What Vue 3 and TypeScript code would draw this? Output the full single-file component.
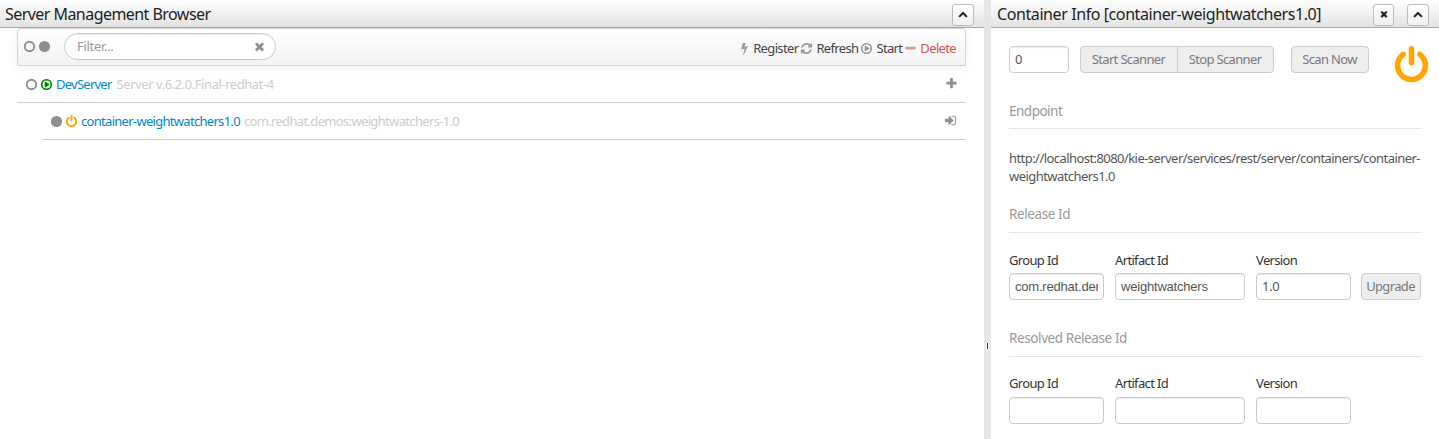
<script setup lang="ts">
import { ref } from 'vue'

const icons: Record<string, string> = {
  times: 'M1490 1322q0 40-28 68l-136 136q-28 28-68 28t-68-28l-294-294-294 294q-28 28-68 28t-68-28l-136-136q-28-28-28-68t28-68l294-294-294-294q-28-28-28-68t28-68l136-136q28-28 68-28t68 28l294 294 294-294q28-28 68-28t68 28l136 136q28 28 28 68t-28 68l-294 294 294 294q28 28 28 68z',
  plus: 'M1600 736v192q0 40-28 68t-68 28h-416v416q0 40-28 68t-68 28h-192q-40 0-68-28t-28-68v-416h-416q-40 0-68-28t-28-68v-192q0-40 28-68t68-28h416v-416q0-40 28-68t68-28h192q40 0 68 28t28 68v416h416q40 0 68 28t28 68z',
  refresh: 'M1639 1056q0 5-1 7-64 268-268 434.500t-478 166.500q-146 0-282.500-55t-243.500-157l-129 129q-19 19-45 19t-45-19-19-45v-448q0-26 19-45t45-19h448q26 0 45 19t19 45-19 45l-137 137q71 66 161 102t187 36q134 0 250-65t186-179q11-17 53-117 8-23 30-23h192q13 0 22.500 9.500t9.500 22.500zm25-800v448q0 26-19 45t-45 19h-448q-26 0-45-19t-19-45 19-45l138-138q-148-137-349-137-134 0-250 65t-186 179q-11 17-53 117-8 23-30 23h-199q-13 0-22.500-9.500t-9.500-22.500v-7q65-268 270-434.500t480-166.500q146 0 284 55.500t245 156.500l130-129q19-19 45-19t45 19 19 45z',
  power: 'M1664 896q0 156-61 298t-164 245-245 164-298 61-298-61-245-164-164-245-61-298q0-182 80.500-343t226.500-270q43-32 95.500-25t83.500 50q32 42 24.500 94.500t-49.500 84.500q-98 74-151.500 181t-53.500 228q0 104 40.500 198.500t109.500 163.500 163.500 109.500 198.500 40.500 198.500-40.500 163.500-109.500 109.500-163.500 40.500-198.500q0-121-53.500-228t-151.500-181q-42-32-49.500-84.500t24.500-94.500q31-43 84-50t95 25q146 109 226.500 270t80.500 343zm-640-768v640q0 52-38 90t-90 38-90-38-38-90v-640q0-52 38-90t90-38 90 38 38 90z',
  bolt: 'M1333 566q18 20 7 44l-540 1157q-13 25-42 25-4 0-14-2-17-5-25.500-19t-4.500-30l197-808-406 101q-4 1-12 1-18 0-31-11-18-15-13-39l201-825q4-14 16-23t28-9h328q19 0 32 12.500t13 29.500q0 8-5 18l-171 463 396-98q8-2 12-2 19 0 34 15z',
  signin: 'M1312 896q0 26-19 45l-544 544q-19 19-45 19t-45-19-19-45v-288h-448q-26 0-45-19t-19-45v-384q0-26 19-45t45-19h448v-288q0-26 19-45t45-19 45 19l544 544q19 19 19 45zm352-352v704q0 119-84.500 203.500t-203.500 84.500h-320q-13 0-22.500-9.500t-9.500-22.500q0-4-1-20t-.5-26.500 3-23.500 10-19.500 20.500-6.500h320q66 0 113-47t47-113v-704q0-66-47-113t-113-47h-312l-11.500-1-11.500-3-8-5.500-7-9-2-13.500q0-4-1-20t-.5-26.500 3-23.500 10-19.500 20.500-6.500h320q119 0 203.500 84.500t84.500 203.500z',
  circle: 'M1664 896a768 768 0 1 1-1536 0a768 768 0 1 1 1536 0z',
  ring: 'M896 370a526 526 0 1 0 0 1052a526 526 0 1 0 0-1052zM896 118a778 778 0 1 1 0 1556a778 778 0 1 1 0-1556z',
  play: 'M1312 896q0 37-32 55l-544 320q-15 9-32 9-16 0-32-8-32-19-32-56v-640q0-37 32-56 33-18 64 1l544 320q32 18 32 55zM896 352a544 544 0 1 0 0 1088a544 544 0 1 0 0-1088zM896 128a768 768 0 1 1 0 1536a768 768 0 1 1 0-1536z',
  minus: 'M1600 736v192q0 40-28 68t-68 28h-1216q-40 0-68-28t-28-68v-192q0-40 28-68t68-28h1216q40 0 68 28t28 68z',
  up: 'M1683 1331l-166 165q-19 19-45 19t-45-19l-531-531-531 531q-19 19-45 19t-45-19l-166-165q-19-19-19-45.500t19-45.500l742-741q19-19 45-19t45 19l742 741q19 19 19 45.500t-19 45.500z',
}

const actions = [
  { name: 'register', icon: 'bolt', label: 'Register' },
  { name: 'refresh', icon: 'refresh', label: 'Refresh' },
  { name: 'start', icon: 'play', label: 'Start' },
  { name: 'delete', icon: 'minus', label: 'Delete' },
]

const filter = ref('')
const interval = ref('0')
const groupId = ref('com.redhat.demos')
const artifactId = ref('weightwatchers')
const version = ref('1.0')
</script>

<template>
  <div class="workbench">
    <section class="browser">
      <header class="bar">
        <h3 class="title-left">Server Management Browser</h3>
        <button class="tool"><svg viewBox="0 0 1792 1792"><path :d="icons.up" /></svg></button>
      </header>
      <div class="toolbar">
        <svg class="i12" viewBox="0 0 1792 1792"><path fill-rule="evenodd" :d="icons.ring" /></svg>
        <svg class="i12 second" viewBox="0 0 1792 1792"><path :d="icons.circle" /></svg>
        <div class="search">
          <input v-model="filter" placeholder="Filter..." />
          <svg viewBox="0 0 1792 1792"><path :d="icons.times" /></svg>
        </div>
        <nav class="actions">
          <a v-for="a in actions" :key="a.name" :class="a.name">
            <svg viewBox="0 0 1792 1792"><path fill-rule="evenodd" :d="icons[a.icon]" /></svg><span>{{ a.label }}</span>
          </a>
        </nav>
      </div>
      <div class="row server">
        <svg class="i12" viewBox="0 0 1792 1792"><path fill-rule="evenodd" :d="icons.ring" /></svg>
        <svg class="i12 green" viewBox="0 0 1792 1792"><path fill-rule="evenodd" :d="icons.play" /></svg>
        <a>DevServer</a><span class="meta">Server v.6.2.0.Final-redhat-4</span>
        <svg class="end" viewBox="0 0 1792 1792"><path :d="icons.plus" /></svg>
      </div>
      <div class="row container">
        <svg class="i12" viewBox="0 0 1792 1792"><path :d="icons.circle" /></svg>
        <svg class="i12 orange" viewBox="0 0 1792 1792"><path :d="icons.power" /></svg>
        <a>container-weightwatchers1.0</a><span class="meta">com.redhat.demos:weightwatchers-1.0</span>
        <svg class="end" viewBox="0 0 1792 1792"><path :d="icons.signin" /></svg>
      </div>
    </section>

    <div class="splitter"><i></i></div>

    <section class="info">
      <header class="bar">
        <h3 class="title-right">Container Info [container-weightwatchers1.0]</h3>
        <button class="tool close"><svg viewBox="0 0 1792 1792"><path :d="icons.times" /></svg></button>
        <button class="tool"><svg viewBox="0 0 1792 1792"><path :d="icons.up" /></svg></button>
      </header>
      <div class="body">
        <div class="scanner">
          <input v-model="interval" class="field interval" />
          <div class="group">
            <button class="btn">Start Scanner</button><button class="btn">Stop Scanner</button>
          </div>
          <button class="btn scan">Scan Now</button>
          <svg class="status" viewBox="0 0 1792 1792"><path :d="icons.power" /></svg>
        </div>
        <h4 class="endpoint">Endpoint</h4>
        <p class="url">http://localhost:8080/kie-server/services/rest/server/containers/container-<br />weightwatchers1.0</p>
        <h4 class="release">Release Id</h4>
        <div class="fields">
          <label>Group Id<input v-model="groupId" class="field arial" /></label>
          <label>Artifact Id<input v-model="artifactId" class="field arial" /></label>
          <label>Version<input v-model="version" class="field version" /></label>
          <button class="btn upgrade">Upgrade</button>
        </div>
        <h4 class="resolved">Resolved Release Id</h4>
        <div class="fields empty">
          <label>Group Id<input class="field" /></label>
          <label>Artifact Id<input class="field" /></label>
          <label>Version<input class="field" /></label>
        </div>
      </div>
    </section>
  </div>
</template>

<style>
body { margin: 0; overflow: hidden; background: #fff; }
</style>

<style scoped>
* { box-sizing: border-box; }
.workbench { display: flex; width: 1439px; height: 439px; overflow: hidden; font: 13px/18px "Noto Sans", Tahoma, sans-serif; color: #333; white-space: nowrap; letter-spacing: -0.65px; }
svg { display: block; flex: none; fill: currentColor; }
input, button { font: inherit; letter-spacing: inherit; margin: 0; outline: none; }
h3, h4, p { margin: 0; font-weight: 400; }
.browser { width: 984px; }
.info { width: 448px; }
.splitter { width: 7px; background: #e6e6e6; display: flex; align-items: flex-end; }
.splitter i { width: 1px; height: 6px; background: #333; box-shadow: 1px 0 #fff, -1px 0 #fff; margin: 0 0 90px 3px; }
.bar { display: flex; align-items: center; height: 28px; padding: 0 10px 0 5px; border-bottom: 1px solid #aaa; background: linear-gradient(#fff, #e3e3e3); }
.bar h3 { margin-right: auto; font-size: 16px; line-height: 27px; padding-top: 1px; color: #222; letter-spacing: -0.55px; }
.info .bar { padding-left: 6px; }
.bar .title-right { letter-spacing: -0.41px; }
.tool { width: 22px; height: 22px; margin-top: 2px; padding: 0 0 1px; display: flex; align-items: center; justify-content: center; border: 1px solid #bbb; border-radius: 3px; background: linear-gradient(#fff, #f0f0f0); color: #222; }
.tool svg { width: 10px; height: 10px; }
.tool.close { width: 21px; margin-right: 13px; }
.toolbar { display: flex; align-items: center; width: 949px; height: 38px; margin-left: 17px; padding: 0 9px 2px 5px; border: 1px solid #d4d4d4; border-radius: 4px 4px 0 0; background: linear-gradient(#fff, #f2f2f2); box-shadow: 0 1px 10px rgba(0, 0, 0, .065); color: #8f8f8f; }
.i12 { width: 13px; height: 13px; }
.second { margin-left: 2px; }
.search { display: flex; align-items: center; width: 212px; height: 27px; margin-left: 13px; padding: 0 9px 0 12px; border: 1px solid #ccc; border-radius: 14px; background: #fff; box-shadow: inset 0 1px 1px rgba(0, 0, 0, .075); }
.search input { flex: 1; min-width: 0; border: 0; padding: 0; background: none; letter-spacing: -0.3px; }
.search input::placeholder { color: #999; opacity: 1; }
.search svg { width: 13px; height: 13px; }
.actions { display: flex; gap: 2px; margin: 4px 0 0 auto; color: #444; }
.actions a { display: flex; align-items: center; }
.actions svg { width: 13px; height: 13px; color: #999; }
.actions span { margin-left: 3px; }
.actions .register span { margin-left: 2px; }
.actions .delete, .actions .delete svg { color: #d9534f; }
.actions .delete svg { opacity: .6; }
.row { display: flex; align-items: center; height: 37px; margin-left: 17px; width: 949px; padding: 0 8px; border-bottom: 1px solid #d0d0d0; color: #8f8f8f; }
.row a { color: #0088cc; margin-left: 3px; letter-spacing: -0.75px; }
.row .meta { color: #ccc; margin-left: 5px; letter-spacing: -0.44px; }
.row .end { width: 13px; height: 13px; margin: -2px 0 0 auto; }
.container { margin-left: 42px; width: 924px; padding-right: 9px; }
.container a { letter-spacing: -0.7px; }
.container .meta { margin-left: 4px; letter-spacing: -0.66px; }
.green { color: #008000; margin-left: 2px; }
.orange { color: #ffa500; margin-left: 2px; }
.body { padding: 18px 0 0 18px; width: 430px; }
.scanner { display: flex; height: 37px; }
.field { display: block; height: 27px; padding: 0 5px; border: 1px solid #ccc; border-radius: 4px; background: #fff; color: #555; box-shadow: inset 0 1px 1px rgba(0, 0, 0, .075); }
.interval { width: 60px; padding-bottom: 2px; }
.arial { font-family: "Liberation Sans", Arial, sans-serif; letter-spacing: -0.2px; }
.version { letter-spacing: -0.3px; padding-bottom: 1px; }
.btn { height: 27px; padding: 0 1px 1px 0; border: 1px solid #ccc; border-radius: 4px; background: #eee; color: #7a7a7a; text-align: center; }
.group { display: flex; margin-left: 11px; }
.group .btn { width: 98px; }
.group .btn:first-child { border-radius: 4px 0 0 4px; }
.group .btn:last-child { border-radius: 0 4px 4px 0; margin-left: -1px; width: 97px; }
.scan { width: 78px; flex: none; margin-left: 17px; }
.status { width: 39px; height: 39px; margin: 0 0 0 23px; color: #ffa500; }
h4 { width: 412px; border-bottom: 1px solid #e5e5e5; font-size: 13.5px; line-height: 18px; color: #999; padding-bottom: 9px; letter-spacing: -0.4px; }
.endpoint { margin-top: 19px; padding-bottom: 8px; letter-spacing: -0.5px; }
.url { margin-top: 20px; color: #555; letter-spacing: -0.56px; }
.release { margin-top: 20px; }
.fields { display: flex; align-items: flex-end; margin-top: 18px; }
label { display: block; width: 95px; margin-right: 11px; }
label:nth-child(2) { width: 130px; }
label .field { width: 100%; margin-top: 4px; }
.empty { margin-top: 17px; }
.empty .field { margin-top: 5px; }
.upgrade { width: 60px; margin-left: -1px; }
.resolved { margin-top: 29px; }
</style>
